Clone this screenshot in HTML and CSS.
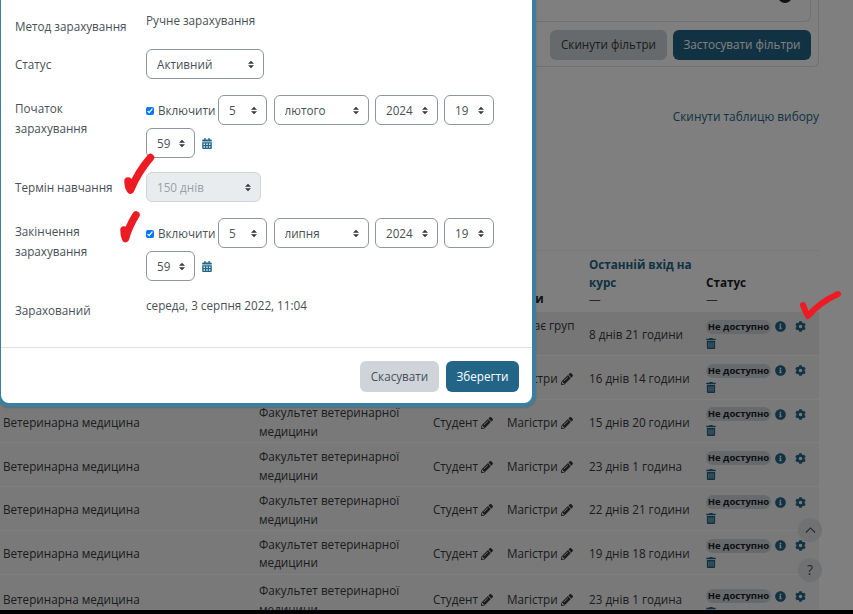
FILE: index.html
```html
<!DOCTYPE html>
<html lang="uk">
<head>
<meta charset="utf-8">
<title>Редагування зарахування</title>
<link rel="stylesheet" href="styles.css">
</head>
<body>
<svg class="sprite" aria-hidden="true">
  <symbol id="i-cog" viewBox="0 0 512 512"><path d="M487.4 315.7l-42.6-24.6c4.3-23.2 4.3-47 0-70.2l42.6-24.6c4.9-2.8 7.1-8.6 5.5-14-11.1-35.6-30-67.8-54.7-94.6-3.8-4.1-10-5.1-14.8-2.3L380.8 110c-17.9-15.4-38.5-27.3-60.8-35.1V25.8c0-5.6-3.9-10.5-9.4-11.7-36.7-8.2-74.3-7.8-109.2 0-5.5 1.2-9.4 6.1-9.4 11.7V75c-22.2 7.9-42.8 19.8-60.8 35.1L88.7 85.5c-4.9-2.8-11-1.9-14.8 2.3-24.7 26.7-43.6 58.9-54.7 94.6-1.7 5.4.6 11.2 5.5 14L67.3 221c-4.3 23.2-4.3 47 0 70.2l-42.6 24.6c-4.9 2.8-7.1 8.6-5.5 14 11.1 35.6 30 67.8 54.7 94.6 3.8 4.1 10 5.1 14.8 2.3l42.6-24.6c17.9 15.4 38.5 27.3 60.8 35.1v49.2c0 5.6 3.9 10.5 9.4 11.7 36.7 8.2 74.3 7.8 109.2 0 5.5-1.2 9.4-6.1 9.4-11.7v-49.2c22.2-7.9 42.8-19.8 60.8-35.1l42.6 24.6c4.9 2.8 11 1.9 14.8-2.3 24.7-26.7 43.6-58.9 54.7-94.6 1.5-5.5-.7-11.3-5.6-14.1zM256 336c-44.1 0-80-35.9-80-80s35.9-80 80-80 80 35.9 80 80-35.9 80-80 80z"/></symbol>
  <symbol id="i-info" viewBox="0 0 512 512"><path d="M256 8C119.043 8 8 119.083 8 256c0 136.997 111.043 248 248 248s248-111.003 248-248C504 119.083 392.957 8 256 8zm0 110c23.196 0 42 18.804 42 42s-18.804 42-42 42-42-18.804-42-42 18.804-42 42-42zm56 254c0 6.627-5.373 12-12 12h-88c-6.627 0-12-5.373-12-12v-24c0-6.627 5.373-12 12-12h12v-64h-12c-6.627 0-12-5.373-12-12v-24c0-6.627 5.373-12 12-12h64c6.627 0 12 5.373 12 12v100h12c6.627 0 12 5.373 12 12v24z"/></symbol>
  <symbol id="i-trash" viewBox="0 0 448 512"><path d="M32 464a48 48 0 0 0 48 48h288a48 48 0 0 0 48-48V128H32zm272-256a16 16 0 0 1 32 0v224a16 16 0 0 1-32 0zm-96 0a16 16 0 0 1 32 0v224a16 16 0 0 1-32 0zm-96 0a16 16 0 0 1 32 0v224a16 16 0 0 1-32 0zM432 32H312l-9.4-18.7A24 24 0 0 0 281.1 0H166.8a23.72 23.72 0 0 0-21.4 13.3L136 32H16A16 16 0 0 0 0 48v32a16 16 0 0 0 16 16h416a16 16 0 0 0 16-16V48a16 16 0 0 0-16-16z"/></symbol>
  <symbol id="i-pencil" viewBox="0 0 512 512"><path d="M497.9 142.1l-46.1 46.1c-4.7 4.7-12.3 4.7-17 0l-111-111c-4.7-4.7-4.7-12.3 0-17l46.1-46.1c18.7-18.7 49.1-18.7 67.9 0l60.1 60.1c18.8 18.7 18.8 49.1 0 67.9zM284.2 99.8L21.6 362.4.4 483.9c-2.9 16.4 11.4 30.6 27.8 27.8l121.5-21.3 262.6-262.6c4.7-4.7 4.7-12.3 0-17l-111-111c-4.8-4.7-12.4-4.7-17.1 0zM124.1 339.9c-5.5-5.5-5.5-14.3 0-19.8l154-154c5.5-5.5 14.3-5.5 19.8 0s5.5 14.3 0 19.8l-154 154c-5.5 5.5-14.3 5.5-19.8 0zM88 424h48v36.3l-64.5 11.3-31.1-31.1L51.7 376H88v48z"/></symbol>
  <symbol id="i-cal" viewBox="0 0 448 512"><path d="M0 464c0 26.5 21.5 48 48 48h352c26.5 0 48-21.5 48-48V192H0v272zm320-196c0-6.6 5.4-12 12-12h40c6.6 0 12 5.4 12 12v40c0 6.6-5.4 12-12 12h-40c-6.6 0-12-5.4-12-12v-40zm0 128c0-6.6 5.4-12 12-12h40c6.6 0 12 5.4 12 12v40c0 6.6-5.4 12-12 12h-40c-6.6 0-12-5.4-12-12v-40zM192 268c0-6.6 5.4-12 12-12h40c6.6 0 12 5.4 12 12v40c0 6.6-5.4 12-12 12h-40c-6.6 0-12-5.4-12-12v-40zm0 128c0-6.6 5.4-12 12-12h40c6.6 0 12 5.4 12 12v40c0 6.6-5.4 12-12 12h-40c-6.6 0-12-5.4-12-12v-40zM64 268c0-6.6 5.4-12 12-12h40c6.6 0 12 5.4 12 12v40c0 6.6-5.4 12-12 12H76c-6.6 0-12-5.4-12-12v-40zm0 128c0-6.6 5.4-12 12-12h40c6.6 0 12 5.4 12 12v40c0 6.6-5.4 12-12 12H76c-6.6 0-12-5.4-12-12v-40zM400 64h-48V16c0-8.8-7.2-16-16-16h-32c-8.8 0-16 7.2-16 16v48H160V16c0-8.8-7.2-16-16-16h-32c-8.8 0-16 7.2-16 16v48H48C21.5 64 0 85.5 0 112v48h448v-48c0-26.5-21.5-48-48-48z"/></symbol>
</svg>

<div class="page">
  <main class="content">
    <section class="filters">
      <div class="filter-inner"><span class="filter-dot"></span></div>
      <div class="filter-actions">
        <button class="btn btn-light">Скинути фільтри</button>
        <button class="btn btn-dark">Застосувати фільтри</button>
      </div>
    </section>
    <div class="reset-row"><a class="link" href="#">Скинути таблицю вибору</a></div>

    <table class="users">
      <colgroup>
        <col class="c-course"><col class="c-faculty"><col class="c-role"><col class="c-group"><col class="c-last"><col class="c-status">
      </colgroup>
      <thead>
        <tr>
          <th></th><th></th><th></th>
          <th class="th-plain">Групи</th>
          <th class="th-link">Останній вхід на курс<span class="dash">—</span></th>
          <th class="th-plain">Статус<span class="dash">—</span></th>
        </tr>
      </thead>
      <tbody>
        <tr class="row-hover">
          <td></td><td></td><td></td>
          <td class="td-top">Не має груп</td>
          <td>8 днів 21 години</td>
          <td><div class="status"><span class="badge">Не доступно</span><svg class="ic ic-info"><use href="#i-info"/></svg><svg class="ic ic-cog"><use href="#i-cog"/></svg><svg class="ic ic-trash"><use href="#i-trash"/></svg></div></td>
        </tr>
        <tr>
          <td></td><td></td><td></td>
          <td>Магістри <svg class="ic ic-pencil"><use href="#i-pencil"/></svg></td>
          <td>16 днів 14 години</td>
          <td><div class="status"><span class="badge">Не доступно</span><svg class="ic ic-info"><use href="#i-info"/></svg><svg class="ic ic-cog"><use href="#i-cog"/></svg><svg class="ic ic-trash"><use href="#i-trash"/></svg></div></td>
        </tr>
        <tr>
          <td>Ветеринарна медицина</td>
          <td>Факультет ветеринарної медицини</td>
          <td>Студент <svg class="ic ic-pencil"><use href="#i-pencil"/></svg></td>
          <td>Магістри <svg class="ic ic-pencil"><use href="#i-pencil"/></svg></td>
          <td>15 днів 20 години</td>
          <td><div class="status"><span class="badge">Не доступно</span><svg class="ic ic-info"><use href="#i-info"/></svg><svg class="ic ic-cog"><use href="#i-cog"/></svg><svg class="ic ic-trash"><use href="#i-trash"/></svg></div></td>
        </tr>
        <tr>
          <td>Ветеринарна медицина</td>
          <td>Факультет ветеринарної медицини</td>
          <td>Студент <svg class="ic ic-pencil"><use href="#i-pencil"/></svg></td>
          <td>Магістри <svg class="ic ic-pencil"><use href="#i-pencil"/></svg></td>
          <td>23 днів 1 година</td>
          <td><div class="status"><span class="badge">Не доступно</span><svg class="ic ic-info"><use href="#i-info"/></svg><svg class="ic ic-cog"><use href="#i-cog"/></svg><svg class="ic ic-trash"><use href="#i-trash"/></svg></div></td>
        </tr>
        <tr>
          <td>Ветеринарна медицина</td>
          <td>Факультет ветеринарної медицини</td>
          <td>Студент <svg class="ic ic-pencil"><use href="#i-pencil"/></svg></td>
          <td>Магістри <svg class="ic ic-pencil"><use href="#i-pencil"/></svg></td>
          <td>22 днів 21 години</td>
          <td><div class="status"><span class="badge">Не доступно</span><svg class="ic ic-info"><use href="#i-info"/></svg><svg class="ic ic-cog"><use href="#i-cog"/></svg><svg class="ic ic-trash"><use href="#i-trash"/></svg></div></td>
        </tr>
        <tr>
          <td>Ветеринарна медицина</td>
          <td>Факультет ветеринарної медицини</td>
          <td>Студент <svg class="ic ic-pencil"><use href="#i-pencil"/></svg></td>
          <td>Магістри <svg class="ic ic-pencil"><use href="#i-pencil"/></svg></td>
          <td>19 днів 18 години</td>
          <td><div class="status"><span class="badge">Не доступно</span><svg class="ic ic-info"><use href="#i-info"/></svg><svg class="ic ic-cog"><use href="#i-cog"/></svg><svg class="ic ic-trash"><use href="#i-trash"/></svg></div></td>
        </tr>
        <tr class="row-last">
          <td>Ветеринарна медицина</td>
          <td>Факультет ветеринарної медицини</td>
          <td>Студент <svg class="ic ic-pencil"><use href="#i-pencil"/></svg></td>
          <td>Магістри <svg class="ic ic-pencil"><use href="#i-pencil"/></svg></td>
          <td>23 днів 1 година</td>
          <td><div class="status"><span class="badge">Не доступно</span><svg class="ic ic-info"><use href="#i-info"/></svg><svg class="ic ic-cog"><use href="#i-cog"/></svg><svg class="ic ic-trash"><use href="#i-trash"/></svg></div></td>
        </tr>
      </tbody>
    </table>
  </main>
  <footer class="page-foot"></footer>

  <button class="fab fab-top" aria-label="Вгору"><svg viewBox="0 0 12 7"><path d="M1 6l5-5 5 5"/></svg></button>
  <button class="fab fab-help">?</button>

  <div class="backdrop"></div>

  <div class="modal">
    <form class="modal-body">
      <div class="row row-static">
        <div class="lbl lbl-low">Метод зарахування</div>
        <div class="val val-text">Ручне зарахування</div>
      </div>
      <div class="row">
        <div class="lbl">Статус</div>
        <div class="val"><select class="sel sel-status"><option>Активний</option></select></div>
      </div>
      <div class="row row-wrap">
        <div class="lbl lbl-two">Початок зарахування</div>
        <div class="val date">
          <label class="check"><input type="checkbox" checked>Включити</label>
          <select class="sel sel-day"><option>5</option></select>
          <select class="sel sel-month"><option>лютого</option></select>
          <select class="sel sel-year"><option>2024</option></select>
          <select class="sel sel-hour"><option>19</option></select>
          <select class="sel sel-min"><option>59</option></select>
          <svg class="ic ic-cal"><use href="#i-cal"/></svg>
        </div>
      </div>
      <div class="row">
        <div class="lbl">Термін навчання</div>
        <div class="val"><select class="sel sel-term" disabled><option>150 днів</option></select></div>
      </div>
      <div class="row row-wrap">
        <div class="lbl lbl-two">Закінчення зарахування</div>
        <div class="val date">
          <label class="check"><input type="checkbox" checked>Включити</label>
          <select class="sel sel-day"><option>5</option></select>
          <select class="sel sel-month"><option>липня</option></select>
          <select class="sel sel-year"><option>2024</option></select>
          <select class="sel sel-hour"><option>19</option></select>
          <select class="sel sel-min"><option>59</option></select>
          <svg class="ic ic-cal"><use href="#i-cal"/></svg>
        </div>
      </div>
      <div class="row row-end">
        <div class="lbl">Зарахований</div>
        <div class="val val-text">середа, 3 серпня 2022, 11:04</div>
      </div>
    </form>
    <div class="modal-foot">
      <button class="btn btn-cancel">Скасувати</button>
      <button class="btn btn-save">Зберегти</button>
    </div>
  </div>

  <svg class="marks" viewBox="0 0 853 614" aria-hidden="true">
    <path class="mark mark-thick" d="M128 181Q128 187 130.500 190Q138 172 150.500 157.500"/>
    <path class="mark mark-thick" d="M124 230Q124 235 125.500 238.500Q129 226 136 215"/>
    <path class="mark" d="M803 305Q805 311 808 316Q820 302 838 294"/>
  </svg>
</div>
</body>
</html>
```

FILE: styles.css
```css
* { box-sizing: border-box; }

html, body {
  margin: 0;
  height: 100%;
  overflow: hidden;
}

body {
  background: #fff;
  color: #373a3c;
  font-family: "Open Sans", "Noto Sans", sans-serif;
  font-size: 11.7px;
  line-height: 19.5px;
}

.sprite { display: none; }

.page {
  position: relative;
  width: 853px;
  height: 614px;
  overflow: hidden;
  display: flex;
  flex-direction: column;
}

.content {
  height: 610px;
  overflow: hidden;
  flex: none;
}

.page-foot {
  flex: 1;
  background: #000;
}

/* background page */
.filters {
  width: 819px;
  height: 67px;
  border: 1px solid #dee2e6;
  border-top: 0;
  border-radius: 0 0 6px 6px;
  padding: 0 7px 0 0;
}

.filter-inner {
  position: relative;
  height: 22px;
  border: 1px solid #dee2e6;
  border-top: 0;
  border-radius: 0 0 6px 6px;
}

.filter-dot {
  position: absolute;
  right: 18px;
  top: -11px;
  width: 14px;
  height: 14px;
  border-radius: 50%;
  background: #222;
}

.filter-actions {
  display: flex;
  justify-content: flex-end;
  gap: 6px;
  margin-top: 8px;
}

.btn {
  height: 30px;
  padding: 0;
  border: 0;
  border-radius: 6px;
  font: inherit;
  color: #373a3c;
}

.btn-light { width: 117px; background: #ced4da; }
.btn-dark { width: 138px; background: #236587; color: #fff; }

.reset-row {
  width: 819px;
  margin-top: 39px;
  text-align: right;
  font-size: 11.85px;
  line-height: 20px;
}

.link {
  color: #236587;
  text-decoration: none;
}

.users {
  width: 819px;
  margin-top: 124px;
  table-layout: fixed;
  border-collapse: collapse;
}

.c-course { width: 256px; }
.c-faculty { width: 174px; }
.c-role { width: 74px; }
.c-group { width: 82px; }
.c-last { width: 117px; }
.c-status { width: 116px; }

.users th {
  height: 61px;
  padding: 4px 3px 4px;
  border-top: 1px solid #f2f2f2;
  text-align: left;
  vertical-align: bottom;
  line-height: 18px;
  font-weight: 700;
}

.th-link { color: #236587; }
.th-plain { color: #1d2125; }

.dash {
  display: block;
  line-height: 16px;
  font-weight: 400;
  color: #495057;
}

.users tbody tr { background: #f2f2f2; }

.users td {
  height: 43.8px;
  padding: 2px 3px 0;
  border-top: 1px solid #fff;
  vertical-align: middle;
  line-height: 18.5px;
}

.users .td-top {
  vertical-align: top;
  padding-top: 4px;
}

.users .row-hover { background: #ececec; }
.users .row-last td { height: 48px; }

.status {
  display: flex;
  flex-wrap: wrap;
  align-items: center;
  width: 105px;
  row-gap: 4px;
}

.row-last .status { margin-top: 8px; }

.badge {
  width: 65px;
  height: 14px;
  border-radius: 7px;
  background: #ced4da;
  color: #1d2125;
  font-size: 9.5px;
  font-weight: 700;
  line-height: 14px;
  text-align: center;
  white-space: nowrap;
}

.ic {
  fill: #236587;
  flex: none;
}

.ic-info { width: 11px; height: 11px; margin-left: 4px; }
.ic-cog { width: 11px; height: 11px; margin-left: 9px; }
.ic-trash { width: 10px; height: 11px; }
.ic-pencil { width: 12px; height: 12px; fill: #373a3c; vertical-align: -2px; }
.ic-cal { width: 10px; height: 11px; align-self: center; }

.fab {
  position: absolute;
  right: 31px;
  width: 24px;
  height: 24px;
  padding: 0;
  border: 0;
  border-radius: 50%;
  background: #dee2e6;
  color: #495057;
  font: inherit;
  font-size: 14px;
}

.fab svg {
  display: block;
  width: 11px;
  margin: 0 auto;
  fill: none;
  stroke: #495057;
  stroke-width: 1.2;
}

.fab-top { top: 518px; }
.fab-help { top: 558px; }

.backdrop {
  position: absolute;
  inset: 0;
  background: rgba(0, 0, 0, .5);
}

/* modal */
.modal {
  position: absolute;
  left: -3px;
  top: -4px;
  width: 539px;
  height: 411px;
  background: #fff;
  border: 4px solid #3a7f9f;
  border-radius: 0 0 12px 12px;
  box-shadow: 0 1px 2px rgba(0, 0, 0, .15);
  color: #495057;
  display: flex;
  flex-direction: column;
}

.modal-body {
  flex: 1;
  margin: 0;
  padding: 10px 14px 0 14px;
}

.row {
  display: flex;
  margin-bottom: 16px;
}

.row-static { margin-bottom: 12.5px; }
.row-wrap { margin-bottom: 14px; }
.row-end { margin-bottom: 0; }

.lbl {
  width: 131px;
  flex: none;
  padding: 6.25px 14px 0 0;
}

.lbl-low { padding-top: 7px; }
.lbl-two { padding-top: 4px; }
.row-end .lbl { padding-top: 6px; }

.val {
  flex: 1;
  min-width: 0;
}

.val-text { padding-top: 1px; }

.date {
  display: flex;
  flex-wrap: wrap;
  align-items: center;
  column-gap: 6.5px;
  row-gap: 3px;
  padding-right: 20px;
}

.check {
  display: flex;
  align-items: center;
  gap: 4px;
  width: 65.5px;
  padding-top: 1px;
  white-space: nowrap;
}

.check input {
  width: 8px;
  height: 8px;
  margin: 0;
}

.sel {
  display: block;
  height: 30px;
  padding: 2px 20px 0 10px;
  border: 1px solid #8f959e;
  border-radius: 6px;
  background: #fff url("data:image/svg+xml,%3Csvg xmlns='http://www.w3.org/2000/svg' viewBox='0 0 4 5'%3E%3Cpath fill='%23343a40' d='M2 0L0 2h4zm0 5L0 3h4z'/%3E%3C/svg%3E") no-repeat right 9px center / 6px 9px;
  color: #495057;
  font: inherit;
  -webkit-appearance: none;
  appearance: none;
}

.sel-status { width: 118px; }
.sel-term { width: 115px; }
.sel-day { width: 49px; }
.sel-month { width: 95px; }
.sel-year { width: 62.5px; }
.sel-hour { width: 50px; }
.sel-min { width: 49px; }

.sel:disabled {
  background-color: #e9ecef;
  border-color: #ced4da;
  color: #9aa1a8;
  opacity: 1;
}

.modal-foot {
  display: flex;
  justify-content: flex-end;
  gap: 7px;
  height: 56px;
  padding: 13px 13px 0 0;
  border-top: 1px solid #dee2e6;
}

.btn-cancel, .btn-save { height: 31px; }
.btn-cancel { width: 79px; background: #ced4da; color: #495057; }
.btn-save { width: 73px; background: #236587; color: #fff; }

/* hand-drawn marks on top of the screenshot */
.marks {
  position: absolute;
  inset: 0;
  width: 853px;
  height: 614px;
  pointer-events: none;
}

.mark {
  fill: none;
  stroke: #ed1c24;
  stroke-width: 6;
  stroke-linecap: round;
  stroke-linejoin: round;
}

.mark-thick { stroke-width: 7.5; }
```
